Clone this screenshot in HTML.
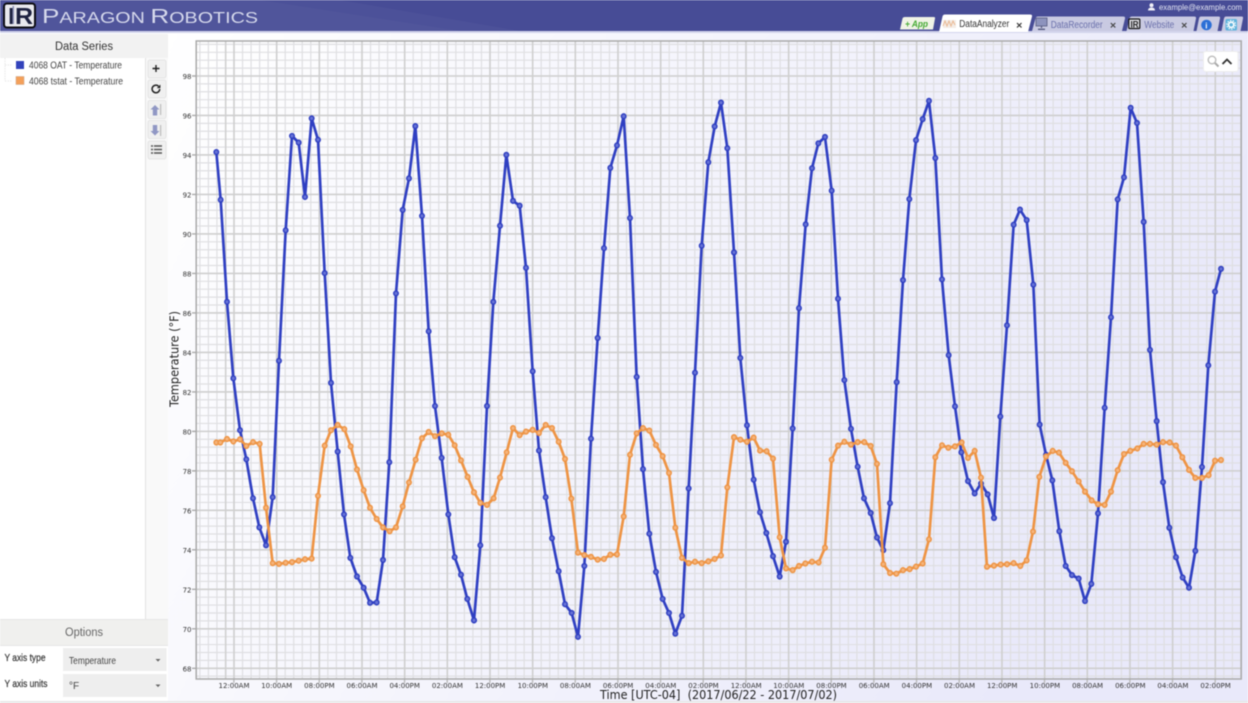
<!DOCTYPE html>
<html><head><meta charset="utf-8"><title>DataAnalyzer</title>
<style>
html,body{margin:0;padding:0;width:1248px;height:703px;overflow:hidden;background:#fff}
svg{display:block;filter:blur(.5px)}
text{font-family:"Liberation Sans",sans-serif}
.dj{font-family:"DejaVu Sans",sans-serif}
.tx{font-family:"DejaVu Sans",sans-serif;font-size:7px;fill:#333;text-anchor:middle}
.ty{font-family:"DejaVu Sans",sans-serif;font-size:7px;fill:#333;text-anchor:end}
</style></head><body>
<svg width="1248" height="703" viewBox="0 0 1248 703" xmlns="http://www.w3.org/2000/svg">
<defs>
<linearGradient id="pg" x1="0" y1="0" x2="1" y2="0.3"><stop offset="0" stop-color="#fff"/><stop offset="1" stop-color="#e9e9fa"/></linearGradient>
<marker id="mb" markerUnits="userSpaceOnUse" markerWidth="30" markerHeight="30" refX="15" refY="15" overflow="visible"><circle cx="15" cy="15" r="6.8" fill="#6672d6" stroke="#2f3fc0" stroke-width="4.200"/></marker>
<marker id="mo" markerUnits="userSpaceOnUse" markerWidth="30" markerHeight="30" refX="15" refY="15" overflow="visible"><circle cx="15" cy="15" r="6.8" fill="#f5b47c" stroke="#ee9444" stroke-width="4.200"/></marker>
</defs>

<!-- page background -->
<rect width="1248" height="703" fill="#fff"/>
<rect x="168" y="32" width="1080" height="669" fill="url(#pg)"/>
<rect x="0" y="701" width="1248" height="2" fill="#e8e8e8"/>

<!-- header -->
<rect width="1248" height="31" fill="#474c96"/>
<polygon points="0,0 262,0 462,31 0,31" fill="#50559b"/>
<polygon points="262,0 340,0 520,31 462,31" fill="#4c5199"/>
<rect y="31" width="1248" height="2" fill="#d3d5ec"/>

<!-- logo -->
<rect x="4" y="3.5" width="31" height="24" rx="3" fill="#e9e9ee" stroke="#0d0d14" stroke-width="2"/>
<text x="8" y="24" font-size="23" font-weight="bold" fill="#1d2140" style="font-family:'Liberation Sans',sans-serif" textLength="25" lengthAdjust="spacingAndGlyphs">IR</text>
<rect x="12.500" y="6" width="1.500" height="18" fill="#8a8fb4"/>
<!-- brand -->
<text x="42" y="23" textLength="216" lengthAdjust="spacingAndGlyphs" fill="#d6d9ec"><tspan font-size="20.5">P</tspan><tspan font-size="15.5">ARAGON </tspan><tspan font-size="20.5">R</tspan><tspan font-size="15.5">OBOTICS</tspan></text>

<!-- user -->
<circle cx="1151.5" cy="5.3" r="2" fill="#f0f0f8"/><path d="M1148 10.5q0-3 3.5-3t3.5 3z" fill="#f0f0f8"/>
<text x="1159" y="10" font-size="8" fill="#e2e4f2" textLength="83" lengthAdjust="spacingAndGlyphs">example@example.com</text>

<!-- tabs -->
<path d="M900 29.5L902.5 18.5Q903 17 905 17L933.5 17Q935.5 17 935 18.5L933 29.5Z" fill="#f0f3e6"/>
<text x="905" y="27" font-size="9.500" font-weight="bold" font-style="italic" fill="#44aa33" textLength="23" lengthAdjust="spacingAndGlyphs">+ App</text>

<path d="M1032 31L1035.5 18.5Q1036 16.5 1038 16.5L1123 16.5Q1125.5 16.5 1125 18.5L1122 31Z" fill="#c9cae2"/>
<path d="M1126.5 31L1129.5 18.5Q1130 16.5 1132 16.5L1194 16.5Q1196.5 16.5 1196 18.5L1193.5 31Z" fill="#c9cae2"/>
<path d="M1196.5 31L1199 18.5Q1199.5 16.5 1201 16.5L1218.5 16.5Q1220.5 16.5 1220 18.5L1217.5 31Z" fill="#c9cae2"/>
<path d="M1221.5 31L1224 18.5Q1224.5 16.5 1226 16.5L1241.5 16.5Q1243.5 16.5 1243 18.5L1240.5 31Z" fill="#c9cae2"/>
<path d="M939 32L942.5 16.5Q943 14.5 945 14.5L1030 14.5Q1032.5 14.5 1032 16.5L1028 32Z" fill="#fff"/>

<rect x="943" y="20" width="13" height="8" fill="#f3ece6"/>
<path d="M943 26l2-5 2 5 2-5 2 5 2-5 2 4" fill="none" stroke="#e9b48c" stroke-width=".9"/>
<text x="959.3" y="27" font-size="10" fill="#333" textLength="50" lengthAdjust="spacingAndGlyphs">DataAnalyzer</text>
<path d="M1017 23l4.5 4.5m0-4.5l-4.5 4.5" stroke="#333" stroke-width="1.2"/>

<rect x="1036" y="18" width="11" height="8" fill="#8d93bd" stroke="#555a80" stroke-width=".8"/>
<path d="M1041.5 26v2M1038 29.3h7" stroke="#555a80" stroke-width="1.3"/>
<text x="1050.7" y="28" font-size="10" fill="#6a70ab" textLength="52" lengthAdjust="spacingAndGlyphs">DataRecorder</text>
<path d="M1110.8 23l4.5 4.5m0-4.5l-4.5 4.5" stroke="#444" stroke-width="1.2"/>

<rect x="1128.8" y="19" width="11" height="9.5" rx="1" fill="#e4e4ea" stroke="#111" stroke-width="1.2"/>
<text x="1130.5" y="27.3" font-size="9" font-weight="bold" fill="#222" textLength="8" lengthAdjust="spacingAndGlyphs">IR</text>
<text x="1144.3" y="28" font-size="10" fill="#6a70ab" textLength="30" lengthAdjust="spacingAndGlyphs">Website</text>
<path d="M1182 23l4.5 4.5m0-4.5l-4.5 4.5" stroke="#444" stroke-width="1.2"/>

<circle cx="1206.5" cy="25" r="5.3" fill="#2c6fd6"/>
<text x="1205.2" y="28.3" font-size="8" font-weight="bold" fill="#fff">i</text>
<rect x="1225.5" y="19" width="11.5" height="11.5" rx="1.5" fill="#5fb3dc"/>
<circle cx="1231.2" cy="24.8" r="2.6" fill="none" stroke="#fff" stroke-width="1.6"/>
<circle cx="1231.2" cy="24.8" r="4.3" fill="none" stroke="#fff" stroke-width="1.2" stroke-dasharray="1.4 1.3"/>

<!-- sidebar -->
<rect x="0" y="33" width="168" height="668" fill="#fff"/>
<rect x="0" y="34" width="168" height="24" fill="#f2f2f2"/>
<text x="55" y="50" font-size="11.5" fill="#333" textLength="58" lengthAdjust="spacingAndGlyphs">Data Series</text>
<path d="M5 58V81M5 65h7M5 81h7" stroke="#e2e2e2" stroke-width=".8" fill="none" stroke-dasharray="1.5 1"/>
<rect x="16" y="61" width="8" height="8" fill="#3343bb"/>
<rect x="16" y="76.5" width="8" height="8" fill="#f4a05a" stroke="#c9a58a" stroke-width=".5"/>
<text x="29" y="68.5" font-size="10.500" fill="#444" textLength="93" lengthAdjust="spacingAndGlyphs">4068 OAT - Temperature</text>
<text x="29" y="84.5" font-size="10.500" fill="#444" textLength="94" lengthAdjust="spacingAndGlyphs">4068 tstat - Temperature</text>

<!-- toolbar -->
<rect x="146" y="58" width="22" height="562" fill="#f9f9f9"/>
<rect x="145" y="58" width="1" height="562" fill="#e2e2e2"/>
<g fill="#f0f0f0" stroke="#e0e0e0" stroke-width=".8">
<rect x="148" y="60" width="18" height="18" rx="2"/>
<rect x="148" y="80" width="18" height="18" rx="2"/>
<rect x="148" y="100.5" width="18" height="18" rx="2"/>
<rect x="148" y="120.5" width="18" height="18" rx="2"/>
<rect x="148" y="141" width="18" height="18" rx="2"/>
</g>
<path d="M156 65v7M152.5 68.5h7" stroke="#222" stroke-width="1.4"/>
<path d="M159.7 89a3.8 3.8 0 1 1-1.2-2.8" fill="none" stroke="#222" stroke-width="1.5"/>
<path d="M160.4 84.5v3.6h-3.6z" fill="#222"/>
<path d="M155 105l4.5 4.5h-2.3v6h-4.4v-6h-2.3z" fill="#9097c4"/><rect x="160" y="104" width="1.2" height="11" fill="#bbb"/>
<path d="M155 135.5l4.5-4.5h-2.3v-6h-4.4v6h-2.3z" fill="#9097c4"/><rect x="160" y="125" width="1.2" height="11" fill="#bbb"/>
<path d="M151 146h2M154 146h8M151 149.5h2M154 149.5h8M151 153h2M154 153h8" stroke="#555" stroke-width="1.5"/>

<!-- options -->
<rect x="0" y="619" width="168" height="27" fill="#f0f0ee"/>
<rect x="0" y="619" width="168" height="1" fill="#e6e6e6"/>
<rect x="0" y="645" width="168" height="1" fill="#e6e6e6"/>
<rect x="0" y="646" width="168" height="55" fill="#fff"/>
<text x="65" y="636" font-size="11.500" fill="#666" textLength="38" lengthAdjust="spacingAndGlyphs">Options</text>
<text x="4.5" y="661" font-size="10.500" fill="#333" textLength="41" lengthAdjust="spacingAndGlyphs" stroke="#333" stroke-width=".2">Y axis type</text>
<text x="4.5" y="687" font-size="10.500" fill="#333" textLength="43" lengthAdjust="spacingAndGlyphs" stroke="#333" stroke-width=".2">Y axis units</text>
<rect x="63" y="648" width="103.500" height="23" fill="#eeeeee"/>
<rect x="63" y="674" width="103.500" height="23" fill="#eeeeee"/>
<text x="69" y="664" font-size="10.500" fill="#444" textLength="47" lengthAdjust="spacingAndGlyphs">Temperature</text>
<text x="69" y="689" font-size="10" fill="#444">°F</text>
<path d="M155.500 659h5l-2.500 2.600z" fill="#666"/>
<path d="M155.500 684.500h5l-2.500 2.600z" fill="#666"/>

<!-- plot grid -->
<g fill="none">
<line x1="199.27" y1="360" x2="1241" y2="360" stroke="#dfdfe2" stroke-width="638" stroke-dasharray="1.2 7.333"/>
<line x1="718.5" y1="43.8" x2="718.5" y2="679" stroke="#dfdfe2" stroke-width="1045" stroke-dasharray="1.2 6.697"/>
<line x1="233.2" y1="360" x2="1241" y2="360" stroke="#cfcfcf" stroke-width="638" stroke-dasharray="1.6 41.065"/>
<line x1="718.5" y1="75.2" x2="718.5" y2="679" stroke="#cfcfcf" stroke-width="1045" stroke-dasharray="1.6 37.887"/>
<line x1="225.700" y1="41" x2="225.700" y2="679" stroke="#d0d0d0" stroke-width="1.5"/>
<line x1="233.2" y1="681" x2="1241" y2="681" stroke="#bbb" stroke-width="4" stroke-dasharray="1.4 41.265"/>
<line x1="194" y1="75.300" x2="194" y2="679" stroke="#aaa" stroke-width="4" stroke-dasharray="1.4 38.087"/>
<rect x="196.200" y="41" width="1045" height="638" stroke="#a9a9a9" stroke-width="1.500"/>
</g>

<!-- y ticks -->
<text class="ty" x="191.500" y="79">98</text>
<text class="ty" x="191.500" y="118.500">96</text>
<text class="ty" x="191.500" y="158">94</text>
<text class="ty" x="191.500" y="197.500">92</text>
<text class="ty" x="191.500" y="237">90</text>
<text class="ty" x="191.500" y="276.500">88</text>
<text class="ty" x="191.500" y="316">86</text>
<text class="ty" x="191.500" y="355.400">84</text>
<text class="ty" x="191.500" y="394.900">82</text>
<text class="ty" x="191.500" y="434.400">80</text>
<text class="ty" x="191.500" y="473.900">78</text>
<text class="ty" x="191.500" y="513.400">76</text>
<text class="ty" x="191.500" y="552.800">74</text>
<text class="ty" x="191.500" y="592.300">72</text>
<text class="ty" x="191.500" y="631.800">70</text>
<text class="ty" x="191.500" y="671.300">68</text>

<!-- x ticks -->
<g>
<text class="tx" x="234" y="688">12:00AM</text>
<text class="tx" x="276.700" y="688">10:00AM</text>
<text class="tx" x="319.400" y="688">08:00PM</text>
<text class="tx" x="362" y="688">06:00AM</text>
<text class="tx" x="404.700" y="688">04:00PM</text>
<text class="tx" x="447.400" y="688">02:00AM</text>
<text class="tx" x="490.100" y="688">12:00PM</text>
<text class="tx" x="532.800" y="688">10:00PM</text>
<text class="tx" x="575.400" y="688">08:00AM</text>
<text class="tx" x="618.100" y="688">06:00PM</text>
<text class="tx" x="660.800" y="688">04:00AM</text>
<text class="tx" x="703.500" y="688">02:00PM</text>
<text class="tx" x="746.200" y="688">12:00AM</text>
<text class="tx" x="788.800" y="688">10:00AM</text>
<text class="tx" x="831.500" y="688">08:00PM</text>
<text class="tx" x="874.200" y="688">06:00AM</text>
<text class="tx" x="916.900" y="688">04:00PM</text>
<text class="tx" x="959.500" y="688">02:00AM</text>
<text class="tx" x="1002.200" y="688">12:00PM</text>
<text class="tx" x="1044.900" y="688">10:00PM</text>
<text class="tx" x="1087.600" y="688">08:00AM</text>
<text class="tx" x="1130.300" y="688">06:00PM</text>
<text class="tx" x="1172.900" y="688">04:00AM</text>
<text class="tx" x="1215.600" y="688">02:00PM</text>
</g>

<!-- axis titles -->
<text class="dj" x="600" y="699" font-size="12" fill="#222" textLength="237" lengthAdjust="spacingAndGlyphs" xml:space="preserve">Time [UTC-04]  (2017/06/22 - 2017/07/02)</text>
<text class="dj" transform="translate(178.500,407) rotate(-90)" font-size="12" fill="#222" textLength="96" lengthAdjust="spacingAndGlyphs">Temperature (°F)</text>

<!-- zoom widget -->
<rect x="1203.500" y="51.500" width="34.500" height="20" rx="2" fill="#fff" stroke="#eee" stroke-width="1"/>
<circle cx="1212" cy="60" r="3.800" fill="none" stroke="#bbb" stroke-width="1.400"/>
<path d="M1215 63l3.500 3.500" stroke="#aaa" stroke-width="2"/>
<path d="M1222.500 64l4.500-4.500 4.500 4.500" fill="none" stroke="#333" stroke-width="1.800"/>

<!-- blue series -->
<g fill="none" stroke="#2f3fc2" stroke-width="8" stroke-linejoin="round" marker-start="url(#mb)" marker-mid="url(#mb)" marker-end="url(#mb)">
<polyline transform="translate(205,90) scale(.33333,.35075)" points="34,177 47,313 66,604 85,822 105,970 124,1053 144,1164 163,1247 183,1298 203,1161 222,772 242,400 261,131 281,150 300,305 320,81 339,142 359,522 378,835 398,1031 417,1210 436,1334 456,1387 476,1419 495,1462 515,1461 534,1340 553,1061 573,580 593,342 612,252 631,103 651,359 671,688 690,901 710,1049 730,1210 749,1332 768,1382 787,1451 807,1512"/>
<polyline transform="translate(465,90) scale(.33333,.35075)" points="27,1512 46,1298 66,901 85,604 105,387 124,185 144,316 164,330 183,507 203,802 222,1028 242,1161 261,1278 281,1372 300,1466 320,1491 339,1559 358,1357 378,994 398,707 417,451 436,222 456,158 476,75 495,365 515,818 534,1081 553,1265 573,1374 593,1451 612,1491 631,1550 651,1499 671,1136 690,806 710,444 730,206 749,104 768,36 787,166 807,463"/>
<polyline transform="translate(725,90) scale(.33333,.35075)" points="27,463 46,764 66,956 86,1111 105,1204 124,1263 144,1329 164,1387 183,1288 203,965 222,622 242,383 261,223 280,152 300,134 320,287 339,595 358,827 378,966 398,1074 417,1164 437,1206 456,1276 475,1312 495,1178 515,833 534,542 553,311 573,143 593,83 612,31 631,194 651,540 671,756 690,902 709,1033 729,1115 749,1150 768,1122 788,1153 807,1220"/>
<polyline transform="translate(975,90) scale(.33333,.35075)" points="57,1220 76,931 96,671 116,384 135,341 155,371 175,555 194,954 213,1040 232,1113 253,1258 272,1357 291,1383 311,1393 330,1457 349,1408 369,1207 389,906 408,648 428,312 447,249 467,51 486,94 506,376 525,741 545,944 564,1118 583,1248 603,1332 623,1390 642,1419 661,1314 681,1075 700,785 720,575 738,510"/>
</g>

<!-- orange series -->
<g fill="none" stroke="#ee9444" stroke-width="8" stroke-linejoin="round" marker-start="url(#mo)" marker-mid="url(#mo)" marker-end="url(#mo)">
<polyline transform="translate(205,90) scale(.33333,.35075)" points="34,1005 46,1005 66,995 85,1002 105,996 124,1015 144,1004 164,1009 183,1191 203,1349 222,1351 242,1348 261,1346 281,1342 300,1338 320,1336 339,1157 359,1014 378,970 398,955 418,967 437,1016 456,1082 476,1141 495,1191 515,1223 534,1247 554,1258 573,1247 593,1187 612,1119 632,1054 651,993 671,975 690,987 710,979 730,983 749,1013 768,1056 788,1103 807,1147"/>
<polyline transform="translate(465,90) scale(.33333,.35075)" points="27,1147 46,1177 66,1183 86,1164 105,1105 125,1033 144,964 164,984 183,974 203,969 222,978 242,955 261,964 281,1003 300,1052 319,1165 339,1319 358,1326 378,1331 398,1339 417,1337 436,1325 456,1324 476,1216 495,1040 515,979 534,964 553,971 573,1012 593,1044 612,1092 631,1248 651,1334 671,1349 690,1345 710,1349 730,1344 749,1337 768,1327 787,1133 807,990"/>
<polyline transform="translate(725,90) scale(.33333,.35075)" points="27,990 46,997 66,1003 86,991 105,1028 125,1030 144,1051 164,1275 183,1364 203,1369 222,1357 241,1350 261,1345 281,1347 300,1305 320,1054 339,1014 358,1003 378,1011 398,1004 418,1004 437,1015 456,1066 475,1352 495,1377 514,1379 534,1369 554,1366 573,1359 593,1350 612,1281 631,1047 651,1013 670,1020 690,1016 710,1005 729,1049 749,1029 768,1105 786,1359"/>
<polyline transform="translate(975,90) scale(.33333,.35075)" points="36,1359 57,1356 77,1353 96,1352 116,1349 136,1357 155,1341 174,1259 193,1103 213,1045 233,1029 252,1034 272,1063 291,1087 311,1116 330,1145 350,1170 369,1181 389,1183 408,1145 428,1084 447,1038 466,1029 487,1022 506,1009 525,1009 545,1011 564,1004 584,1005 603,1014 622,1047 642,1083 661,1106 681,1106 701,1098 720,1057 738,1055"/>
</g>
</svg>
</body></html>
